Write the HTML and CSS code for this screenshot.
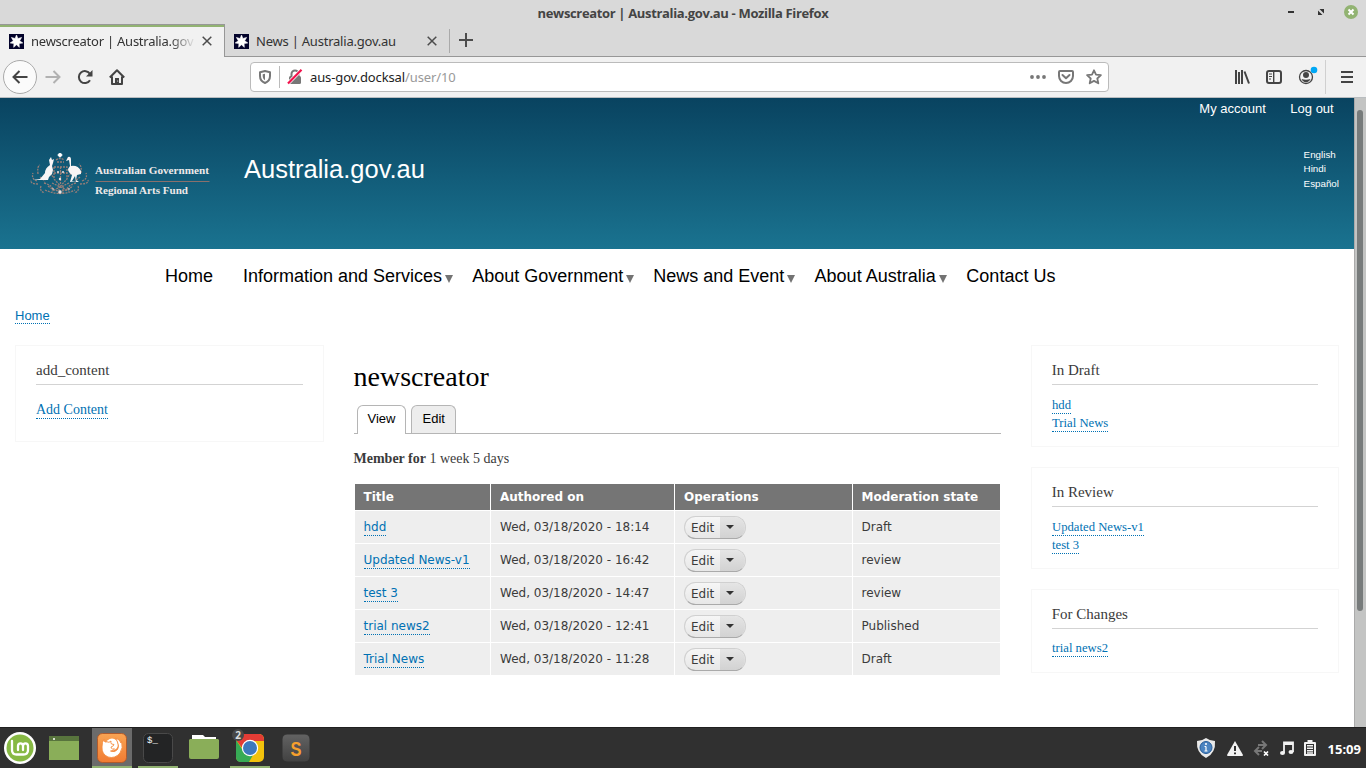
FILE: index.html
```html
<!DOCTYPE html>
<html lang="en">
<head>
<meta charset="utf-8">
<title>newscreator | Australia.gov.au</title>
<link rel="stylesheet" href="styles.css">
</head>
<body>
<svg class="defs" width="0" height="0">
  <symbol id="favicon" viewBox="0 0 15 15">
    <rect width="15" height="15" fill="#03032b"/>
    <path d="M7.500 1l1.400 3.500 3.700-1.050-1.900 3.350 3.100 2.150-3.700.6.200 3.800-2.800-2.550-2.800 2.550.2-3.800-3.700-.6 3.100-2.150-1.900-3.350 3.700 1.050z" fill="#fff" stroke="#fff" stroke-width=".6"/>
  </symbol>
  <symbol id="close" viewBox="0 0 10 10"><path d="M.7.7l8.600 8.600M9.300.7L.7 9.300" stroke="#4c4c4c" stroke-width="1.500" fill="none"/></symbol>
  <symbol id="caret" viewBox="0 0 8 4"><path d="M0 0h8L4 4z" fill="#333"/></symbol>
</svg>

<header class="titlebar">
  <span class="window-title">newscreator | Australia.gov.au - Mozilla Firefox</span>
  <svg class="window-controls" width="80" height="24" viewBox="0 0 80 24">
    <path d="M2 12h6" stroke="#333" stroke-width="2"/>
    <path d="M33.500 9h4.500v4.500zM32 10.500v4.500h4.500z" fill="#333"/>
    <circle cx="65" cy="12" r="7" fill="#92b372"/>
    <path d="M62.500 9.500l5 5M67.500 9.500l-5 5" stroke="#fff" stroke-width="2"/>
  </svg>
</header>

<nav class="tabs">
  <div class="tab tab-active">
    <svg width="15" height="15"><use href="#favicon"/></svg>
    <span class="tab-title fade">newscreator | Australia.gov</span>
    <svg class="tab-close" width="10" height="10"><use href="#close"/></svg>
  </div>
  <div class="tab">
    <svg width="15" height="15"><use href="#favicon"/></svg>
    <span class="tab-title">News | Australia.gov.au</span>
    <svg class="tab-close" width="10" height="10"><use href="#close"/></svg>
  </div>
  <div class="tab-new"><svg width="14" height="14" viewBox="0 0 14 14"><path d="M7 0v14M0 7h14" stroke="#4c4c4c" stroke-width="2"/></svg></div>
</nav>

<div class="toolbar">
  <div class="nav-buttons">
    <span class="back"><svg width="16" height="14" viewBox="0 0 16 14"><path d="M15.500 7H1.500M7.500 1l-6 6 6 6" stroke="#444" stroke-width="2" fill="none"/></svg></span>
    <svg width="16" height="14" viewBox="0 0 16 14"><path d="M.5 7h14M8.500 1l6 6-6 6" stroke="#b1b1b1" stroke-width="2" fill="none"/></svg>
    <svg width="16" height="16" viewBox="0 0 16 16"><path d="M13 11.200A6 6 0 1 1 13 5" stroke="#444" stroke-width="2" fill="none"/><path d="M15.500 1v6.500H9z" fill="#444"/></svg>
    <svg width="16" height="16" viewBox="0 0 16 16"><path d="M.8 8.500L8 1.300l7.200 7.200M3 7.500V15h10V7.500" stroke="#444" stroke-width="2" fill="none" stroke-linejoin="round"/><path d="M6 15V9h4v6z" fill="#444"/><circle cx="8.700" cy="12" r=".6" fill="#fff"/></svg>
  </div>
  <div class="urlbar">
    <svg width="12" height="14" viewBox="0 0 12 14"><path d="M6 1L11 2.200V6c0 3.600-2 5.800-5 7C3 11.800 1 9.600 1 6V2.200z" fill="none" stroke="#777" stroke-width="2" stroke-linejoin="round"/><path d="M6 3.800v6.400C4.500 9.300 3.700 8 3.700 6V4.300z" fill="#777"/></svg>
    <span class="url-divider"></span>
    <svg width="16" height="16" viewBox="0 0 16 16"><path d="M4.500 8V5a3.500 3.500 0 0 1 7 0v3" stroke="#777" stroke-width="2" fill="none"/><rect x="2" y="7" width="12" height="8" rx="1.500" fill="#777"/><path d="M1 14.500L14.500.8" stroke="#fff" stroke-width="3.600"/><path d="M1 14.500L14.500.8" stroke="#f2124c" stroke-width="2.200"/></svg>
    <span class="url">aus-gov.docksal<span class="url-path">/user/10</span></span>
    <svg width="16" height="4" viewBox="0 0 16 4"><g fill="#777"><circle cx="2" cy="2" r="1.900"/><circle cx="8" cy="2" r="1.900"/><circle cx="14" cy="2" r="1.900"/></g></svg>
    <svg width="16" height="14" viewBox="0 0 16 14"><path d="M2 1h12q1 0 1 1v4a7 7 0 0 1-14 0V2q0-1 1-1z" fill="none" stroke="#777" stroke-width="2"/><path d="M4.500 5L8 8.300 11.500 5" fill="none" stroke="#777" stroke-width="2" stroke-linecap="round" stroke-linejoin="round"/></svg>
    <svg width="16" height="16" viewBox="0 0 16 16"><path d="M8 1.300l2 4.400 4.900.5-3.600 3.300 1 4.800L8 11.900l-4.300 2.400 1-4.800L1.100 6.200 6 5.700z" fill="none" stroke="#777" stroke-width="1.800" stroke-linejoin="round"/></svg>
  </div>
  <div class="tools">
    <svg width="16" height="14" viewBox="0 0 16 14"><path d="M2 0v14M5 2v12M8 0v14M10.500 1.500L15 13.500" stroke="#444" stroke-width="2" fill="none"/></svg>
    <svg width="16" height="14" viewBox="0 0 16 14"><rect x="1" y="1" width="14" height="12" rx="2" fill="none" stroke="#444" stroke-width="2"/><path d="M7.700 1v12" stroke="#444" stroke-width="1.400"/><path d="M3 4h3M3 6.500h3M3 9h2" stroke="#444"/></svg>
    <svg width="20" height="20" viewBox="0 0 20 20"><circle cx="8" cy="11" r="6.500" fill="none" stroke="#444" stroke-width="1.300"/><circle cx="8" cy="9" r="3" fill="#444"/><path d="M3.500 13q4.500 1.500 9 0a4.800 4.800 0 0 1-9 0z" fill="#444"/><circle cx="16" cy="4" r="3.300" fill="#00a8f5"/></svg>
    <span class="tool-divider"></span>
    <svg width="12" height="12" viewBox="0 0 12 12"><path d="M0 1h12M0 6h12M0 11h12" stroke="#444" stroke-width="2"/></svg>
  </div>
</div>

<div class="viewport">
  <div class="page">
    <header class="banner">
      <div class="brand">
        <svg class="logo" width="182" height="46" viewBox="0 0 182 46">
          <g fill="none" stroke="#967e78" stroke-width="1.300" stroke-dasharray="2 1">
            <path d="M7 28q-6-2-4-8M8 31q-8 0-7-4M11 33q-2 5 4 7M8 21q-1-8 2-9M52 28q6-2 4-8M50 31q9 0 8-4M48 33q2 5-4 7M51 20q1-7-2-9"/>
            <path d="M24 14h13v12l-6.500 7L24 26zM24 20h13M30.500 14v18M18 33q12 10 25 0M15 37q15 7 30 0M22 30l17 8M39 30l-17 8"/>
            <path d="M26 7q4-3 8 0M27 9h7M20 20l4 5M41 20l-4 5M29 33v8M33 33v8M14 30q8 2 10 8M46 30q-8 2-10 8M10 24l5 4M50 24l-5 4"/>
          </g>
          <circle cx="30" cy="2" r="2" fill="#fff"/><path d="M30 0v4.500M27.500 2h5" stroke="#fff"/>
          <path d="M21 4l1 3 2-1-1 4-1 3 1 4-1 4-3 3-1 3h-3l-8 0H3l7-1 5-6q0-5 5-8l-1-5z" fill="#f8f5f5"/>
          <path d="M38 4q3-1 3 3v6q7-1 10 5v3l-4 1-1 5 3 2h-3l-1-6-3 5h4l-6 1 2-7q-4-3-4-6l2-3-1-6-3 1z" fill="#f8f5f5"/>
          <g fill="#ece3e1"><circle cx="28" cy="19" r="1"/><circle cx="33" cy="19" r="1"/><circle cx="30" cy="26" r="1.200"/><circle cx="30" cy="39" r="1.700"/><circle cx="23" cy="36" r=".8"/><circle cx="39" cy="36" r=".8"/></g>
          <path d="M65.500 28.500h114" stroke="#8a706c"/>
          <g class="logo-text"><text x="65" y="22" textLength="114" lengthAdjust="spacingAndGlyphs">Australian Government</text><text x="65" y="41.500" textLength="93" lengthAdjust="spacingAndGlyphs">Regional Arts Fund</text></g>
        </svg>
        <span class="site-name">Australia.gov.au</span>
      </div>
      <div class="banner-links">
        <div class="account"><a>My account</a><a>Log out</a></div>
        <div class="languages"><a>English</a><a>Hindi</a><a>Español</a></div>
      </div>
    </header>

    <nav class="main-menu">
      <a>Home</a>
      <a class="has-children">Information and Services</a>
      <a class="has-children">About Government</a>
      <a class="has-children">News and Event</a>
      <a class="has-children">About Australia</a>
      <a>Contact Us</a>
    </nav>

    <div class="breadcrumb"><a class="link">Home</a></div>

    <div class="columns">
      <aside>
        <section class="block block-add"><h2>add_content</h2><div><a class="link">Add Content</a></div></section>
      </aside>
      <main>
        <h1>newscreator</h1>
        <div class="page-tabs"><a class="current">View</a><a>Edit</a></div>
        <p class="member"><b>Member for</b> 1 week 5 days</p>
        <div class="table">
          <div class="th">Title</div><div class="th">Authored on</div><div class="th">Operations</div><div class="th">Moderation state</div>
          <div><a class="link">hdd</a></div><div>Wed, 03/18/2020 - 18:14</div><div><span class="drop"><span>Edit</span><i><svg width="8" height="4"><use href="#caret"/></svg></i></span></div><div>Draft</div>
          <div><a class="link">Updated News-v1</a></div><div>Wed, 03/18/2020 - 16:42</div><div><span class="drop"><span>Edit</span><i><svg width="8" height="4"><use href="#caret"/></svg></i></span></div><div>review</div>
          <div><a class="link">test 3</a></div><div>Wed, 03/18/2020 - 14:47</div><div><span class="drop"><span>Edit</span><i><svg width="8" height="4"><use href="#caret"/></svg></i></span></div><div>review</div>
          <div><a class="link">trial news2</a></div><div>Wed, 03/18/2020 - 12:41</div><div><span class="drop"><span>Edit</span><i><svg width="8" height="4"><use href="#caret"/></svg></i></span></div><div>Published</div>
          <div><a class="link">Trial News</a></div><div>Wed, 03/18/2020 - 11:28</div><div><span class="drop"><span>Edit</span><i><svg width="8" height="4"><use href="#caret"/></svg></i></span></div><div>Draft</div>
        </div>
      </main>
      <aside>
        <section class="block"><h2>In Draft</h2><div><a class="link">hdd</a></div><div><a class="link">Trial News</a></div></section>
        <section class="block"><h2>In Review</h2><div><a class="link">Updated News-v1</a></div><div><a class="link">test 3</a></div></section>
        <section class="block block-changes"><h2>For Changes</h2><div><a class="link">trial news2</a></div></section>
      </aside>
    </div>
  </div>
  <div class="scrollbar"><div class="thumb"></div></div>
</div>

<footer class="taskbar">
  <div class="apps">
    <span class="app"><svg width="32" height="32" viewBox="0 0 32 32"><circle cx="16" cy="16" r="16" fill="#fff"/><circle cx="16" cy="16" r="13.500" fill="#87b944"/><path d="M8 9v9q0 4.500 4.500 4.500h7q4.500 0 4.500-4.500v-4q0-2.700-2.500-2.700T19 14v4M19 14q0-2.700-2.500-2.700T14 14v4" fill="none" stroke="#fff" stroke-width="2.300" stroke-linecap="round"/></svg></span>
    <span class="app desktop"><svg width="30" height="24" viewBox="0 0 30 24"><path d="M0 0h30v24H0z" fill="#8aae59"/><path d="M0 0h30v5H0z" fill="#58743d"/><circle cx="5" cy="3" r="1" fill="#fff"/></svg></span>
    <span class="app open focused"><svg width="30" height="30" viewBox="0 0 30 30"><defs><linearGradient id="ff" x2="0" y2="1"><stop stop-color="#f9a453"/><stop offset="1" stop-color="#f17b32"/></linearGradient></defs><rect x=".5" y=".5" width="29" height="29" rx="5" fill="url(#ff)" stroke="#b15b2c"/><circle cx="15" cy="11.500" r="6" fill="#fff"/><path d="M7 6q0 2 1 3 2-.5 4 .3l2-1.300q-.5 2 .5 3l2.500.5q0 1.500-3 2.500 0 1.500 1.500 2l2-.2q-1 2.500-4 2.200 4 2 7-1.500 2-3 0-7.500L18.500 5Q23 6.500 24 10l.5-2q2 7-1.500 12-5 6-12 4-6.500-3-6-10Q5 9 7 6z" fill="#fff" stroke="#f48c3f" stroke-width=".9"/></svg></span>
    <span class="app open"><svg width="30" height="30" viewBox="0 0 30 30"><rect x=".5" y=".5" width="29" height="29" rx="5" fill="#232425" stroke="#494949"/><text class="prompt" x="4" y="10">$_</text></svg></span>
    <span class="app folder"><svg width="30" height="26" viewBox="0 0 30 26"><path d="M3 5V1h11l2 2h11v4z" fill="#fff"/><path d="M1 5h28l1 1v17q0 2-2 2H2q-2 0-2-2V6z" fill="#8aae59"/></svg></span>
    <span class="app open"><svg width="30" height="30" viewBox="0 0 30 30"><rect x="1" y="1" width="28" height="28" rx="5" fill="#f2c20c"/><path d="M1 7q0-6 5-6h18q5 0 5 6v1H15l-7 8z" fill="#e33c35"/><path d="M1 7l8 12q3 5 9 3l-4 7H6q-5 0-5-5z" fill="#37ab55"/><circle cx="15" cy="15" r="8.200" fill="#fff"/><circle cx="15" cy="15" r="7" fill="#3d79bd"/></svg><b class="badge">2</b></span>
    <span class="app"><svg width="30" height="30" viewBox="0 0 30 30"><defs><linearGradient id="sub" x2="0" y2="1"><stop stop-color="#636363"/><stop offset="1" stop-color="#414141"/></linearGradient></defs><rect x="1" y="1" width="28" height="28" rx="5" fill="url(#sub)" stroke="#303030"/><text class="sublime" x="9.500" y="22.500" textLength="11" lengthAdjust="spacingAndGlyphs">S</text></svg></span>
  </div>
  <div class="tray">
    <svg width="20" height="20" viewBox="0 0 20 20"><path d="M10 0q4 3 9 3 1 12-9 17Q0 15 1 3q5 0 9-3z" fill="#e9e9e9"/><circle cx="10" cy="9.500" r="6" fill="#4b84c1" stroke="#255c99"/><path d="M10 8.500v4M8.500 8.500H10M8.500 13h3" stroke="#fff" stroke-width="1.200"/><circle cx="10" cy="6" r="1" fill="#fff"/></svg>
    <svg width="16" height="15" viewBox="0 0 16 15"><path d="M8 0l8 14q0 1-1 1H1q-1 0-1-1z" fill="#f2f2f2"/><path d="M8 5v5M8 11.500v1.800" stroke="#303030" stroke-width="2"/></svg>
    <svg width="16" height="16" viewBox="0 0 16 16"><path d="M5 5h8M9 1l4 4-4 4M9 11H2M6 7l-4 4 4 4" fill="none" stroke="#777" stroke-width="2"/><path d="M10 10h6v6h-6z" fill="#303030"/><path d="M11 11.500l4 4M15 11.500l-4 4" stroke="#fff" stroke-width="1.700"/></svg>
    <svg width="14" height="14" viewBox="0 0 14 14"><path d="M4 12V1.500h9V11M4 3h9" fill="none" stroke="#f2f2f2" stroke-width="1.800"/><ellipse cx="2.500" cy="12" rx="2.500" ry="1.900" fill="#f2f2f2"/><ellipse cx="11" cy="11" rx="2.500" ry="1.900" fill="#f2f2f2"/></svg>
    <svg width="12" height="16" viewBox="0 0 12 16"><path d="M3.500 2V0h5v2H11q1 0 1 1v12q0 1-1 1H1q-1 0-1-1V3q0-1 1-1z" fill="#f2f2f2"/><path d="M2 4h8v10H2z" fill="#303030"/><path d="M3 5.700h6M3 8.200h6M3 10.700h6M3 13h6" stroke="#f2f2f2" stroke-width="1.400"/></svg>
    <span class="clock">15:09</span>
  </div>
</footer>
</body>
</html>
```
FILE: styles.css
```css
* { box-sizing: border-box; }
body { margin: 0; width: 1366px; height: 768px; overflow: hidden; display: flex; flex-direction: column; background: #fff; color: #3b3b3b; font-family: "Liberation Serif", serif; white-space: nowrap; }
svg { display: block; flex: none; }
.defs { position: absolute; }

.titlebar { height: 24px; background: #d9d9d9; display: grid; grid-template: 24px / 80px 1fr 80px; }
.window-title { grid-column: 2; text-align: center; font: bold 13px/27px "Open Sans", sans-serif; color: #444; letter-spacing: -.34px; }

.tabs { height: 33px; background: #d9d9d9; display: flex; font: 13px/20px "Noto Sans", sans-serif; color: #333; }
.tab { width: 224px; border-bottom: 1px solid #979797; padding: 2px 0 0 10px; display: flex; align-items: center; }
.tab-active { width: 225px; background: #f1f1f1; border-bottom: 0; border-top: 1px solid #979797; border-right: 1px solid #979797; box-shadow: inset 0 2px #92b372; padding: 0 0 0 10px; }
.tab-title { margin-left: 6px; width: 165px; letter-spacing: -.22px; }
.tab svg:first-child { margin-left: -1px; margin-right: 1px; }
.fade { letter-spacing: -.24px; -webkit-mask-image: linear-gradient(90deg, #000 84%, transparent); mask-image: linear-gradient(90deg, #000 84%, transparent); }
.tab-close { margin-left: 6px; }
.tab-new { flex: 1; border-bottom: 1px solid #979797; display: flex; align-items: center; padding-left: 10px; background: linear-gradient(#aaa, #aaa) 0 5px / 1px 24px no-repeat; }

.toolbar { height: 41px; background: #f1f1f1; border-bottom: 1px solid #b9bdc0; display: flex; align-items: center; }
.nav-buttons { width: 250px; padding-left: 3px; display: flex; align-items: center; gap: 16px; }
.back { width: 34px; height: 34px; margin-right: -8px; border: 1px solid #aaa; border-radius: 50%; background: #fbfbfb; display: grid; place-items: center; }
.urlbar { width: 859px; height: 30px; border: 1px solid #bbb; border-radius: 4px; background: #fff; display: flex; align-items: center; padding: 0 6px 0 8px; gap: 12px; }
.url-divider { width: 1px; height: 22px; background: #bbb; margin: 0 -5px 0 -4px; }
.url { flex: 1; font: 13px/20px "Noto Sans", sans-serif; color: #222; margin-left: -5px; letter-spacing: -.12px; }
.url-path { color: #999; }
.tools { flex: 1; display: flex; align-items: center; justify-content: flex-end; gap: 16px; padding-right: 13px; }
.tools svg:nth-child(3) { margin: -3px -8px 0 0; }
.tool-divider { width: 1px; height: 34px; background: #d0d0d0; margin-left: -1px; margin-right: -1px; }

.viewport { height: 629px; display: flex; }
.page { width: 1354px; }
.scrollbar { width: 12px; background: #c3c4c3; border-left: 1px solid #aaa; padding: 12px 0 0 2px; }
.thumb { width: 6px; height: 501px; border-radius: 3px; background: #777b7b; }

.banner { height: 151px; background: linear-gradient(#094360, #1a7390); color: #fff; display: flex; justify-content: space-between; font-family: "Liberation Sans", sans-serif; }
.brand { display: flex; padding: 54px 0 0 30px; gap: 32px; }
.logo { margin-top: 1px; }
.logo-text { font: bold 11px "Liberation Serif", serif; fill: #eee9e9; transform: translateY(-1px); }
.site-name { font-size: 25.500px; line-height: 34px; }
.banner-links { display: flex; flex-direction: column; align-items: flex-end; padding-right: 15px; }
.account { display: flex; gap: 24.500px; font-size: 13px; line-height: 22px; padding-right: 5.300px; }
.languages { display: flex; flex-direction: column; font-size: 9.800px; line-height: 14.400px; margin-top: 28px; }

.main-menu { height: 54px; display: flex; gap: 30px; padding-left: 165px; font: 18px/54px "Liberation Sans", sans-serif; color: #000; }
.main-menu a:nth-child(5) { margin-left: .3px; margin-right: .7px; }
.has-children { position: relative; }
.has-children::after { content: ""; position: absolute; left: calc(100% + 3px); top: 26px; border: 4.500px solid transparent; border-top: 8px solid #737373; border-bottom: 0; }
.link { color: #0071b3; border-bottom: 1px dotted #0071b3; display: inline-block; line-height: 1.150; }
.breadcrumb { height: 42px; padding: 5px 15px; font: 13px/16px "Liberation Sans", sans-serif; }
.breadcrumb .link { line-height: 14px; }

.columns { display: grid; grid-template-columns: 309px 647px 308px; gap: 30px; padding: 0 15px; align-items: start; }
.block { border: 1px solid #f7f7f7; padding: 14px 20px; margin-bottom: 20px; font-size: 12.700px; line-height: 18px; }
.block h2 { margin: 0 0 11px; height: 25px; border-bottom: 1px solid #d3d3d3; font: 15px/20px "Liberation Serif", serif; text-indent: -.3px; }
.block div { height: 18px; }
.block-changes { height: 84px; }
.block-changes h2 { margin-bottom: 10px; }
.block-add { height: 97px; font-size: 14px; }
.block-add h2 { margin-bottom: 16px; text-indent: 0; }
.block-add .link { line-height: 17px; }

h1 { margin: 15px 0 0 -.5px; font: 28px/34px "Liberation Serif", serif; color: #000; }
.page-tabs { margin-top: 11px; height: 29px; border-bottom: 1px solid #b5b5b5; padding-left: 3px; display: flex; gap: 5px; font: 13px/26px "Liberation Sans", sans-serif; color: #000; }
.page-tabs a { height: 28px; width: 45px; padding-left: 10.500px; border: 1px solid #b5b5b5; border-bottom: 0; border-radius: 6px 6px 0 0; background: #ededed; }
.page-tabs .current { width: 49px; height: 29px; padding-left: 9.500px; background: #fff; }
.member { margin: 14px 0 0 -.5px; font-size: 14px; line-height: 22px; }
.table { margin: 14px 1px 0; display: grid; grid-template-columns: 135px 183px 177px 147px; grid-template-rows: 26px repeat(5, 32px); gap: 1px; font: 12px/16px "DejaVu Sans", sans-serif; }
.table > div { background: #eee; padding: 8px 9px 0; }
.table > div:nth-child(4n+1), .table > div:nth-child(4n) { padding-left: 8.500px; }
.table > .th { background: #757575; color: #fff; font-weight: bold; padding-top: 5px; }
.drop { width: 62px; height: 23px; margin-top: -3px; display: flex; border: 1px solid #d0d0d0; border-bottom-color: #aaa; border-radius: 12px; overflow: hidden; line-height: 22px; background: linear-gradient(#f6f6f6, #e7e7e7); }
.drop span { width: 35px; padding-left: 6px; }
.drop i { flex: 1; padding: 8px 0 0 6px; background: linear-gradient(#e5e5e5, #d2d2d2); font-style: normal; }

.taskbar { height: 41px; background: #303030; border-top: 1px solid #202020; display: flex; justify-content: space-between; }
.apps { display: flex; gap: 6px; }
.app { position: relative; width: 40px; height: 40px; display: grid; place-items: center; }
.desktop { padding-right: 4px; }
.folder { padding-bottom: 2px; }
.open { box-shadow: inset 0 -2px #92b372; }
.focused { background: #6b6b6b; }
.badge { position: absolute; left: 2px; top: 1px; width: 12px; height: 12px; border-radius: 50%; background: #484848; color: #ddd; font: bold 10px/12px "Noto Sans", sans-serif; text-align: center; }
.prompt { font: 9px "Liberation Mono", monospace; fill: #fff; }
.sublime { font: bold 21px "Liberation Sans", sans-serif; fill: #f6a02d; }
.tray { display: flex; align-items: center; gap: 10.500px; padding-right: 5px; }
.clock { font: bold 13px/20px "Noto Sans", sans-serif; color: #fff; letter-spacing: 0; padding-top: 2px; margin-left: 1px; }
```
